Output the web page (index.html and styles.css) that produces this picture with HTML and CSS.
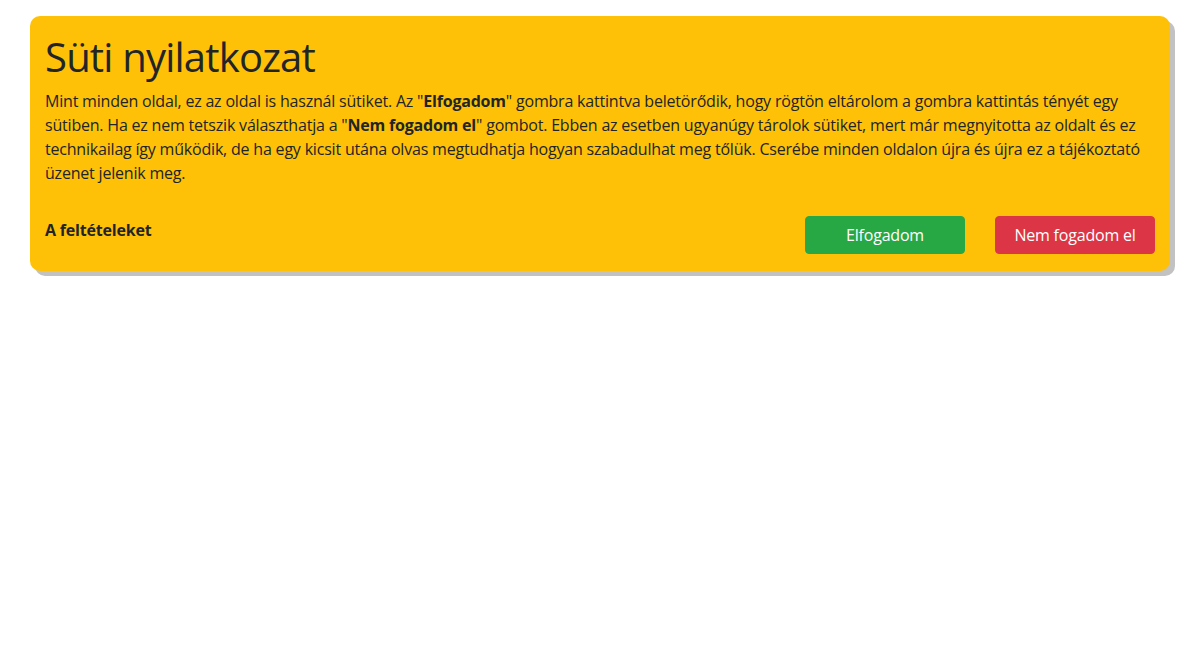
FILE: index.html
```html
<!DOCTYPE html>
<html lang="hu">
<head>
<meta charset="utf-8">
<title>Süti nyilatkozat</title>
<link rel="stylesheet" href="styles.css">
</head>
<body>
<div class="page">
  <div class="cookie-card">
    <h1 class="cookie-title">Süti nyilatkozat</h1>
    <p class="cookie-text">Mint minden oldal, ez az oldal is használ sütiket. Az "<b>Elfogadom</b>" gombra kattintva beletörődik, hogy rögtön eltárolom a gombra kattintás tényét egy sütiben. Ha ez nem tetszik választhatja a "<b>Nem fogadom el</b>" gombot. Ebben az esetben ugyanúgy tárolok sütiket, mert már megnyitotta az oldalt és ez technikailag így működik, de ha egy kicsit utána olvas megtudhatja hogyan szabadulhat meg tőlük. Cserébe minden oldalon újra és újra ez a tájékoztató üzenet jelenik meg.</p>
    <div class="cookie-footer">
      <a class="terms-link">A feltételeket</a>
      <div class="cookie-actions">
        <button class="btn btn-accept">Elfogadom</button>
        <button class="btn btn-decline">Nem fogadom el</button>
      </div>
    </div>
  </div>
</div>
</body>
</html>
```

FILE: styles.css
```css
html, body {
  margin: 0;
  padding: 0;
  background: #fff;
}
body {
  font-family: "Open Sans", "Noto Sans", sans-serif;
  color: #212529;
  font-size: 16px;
  line-height: 1.5;
}
.page {
  padding: 16px 30px;
}
.cookie-card {
  background: #ffc107;
  border-radius: 10px;
  box-shadow: 5px 5px 0 #c2c2c2;
  padding: 17px 15px 17px 15px;
}
.cookie-title {
  margin: 0 0 8px 0;
  font-size: 40px;
  font-weight: 400;
  line-height: 1.2;
  letter-spacing: -0.8px;
}
.cookie-text {
  margin: 0 0 31px 0;
  letter-spacing: -0.2px;
}
.cookie-text b {
  font-weight: 700;
}
.cookie-footer {
  display: flex;
  justify-content: space-between;
  align-items: flex-start;
}
.terms-link {
  font-weight: 700;
  color: #212529;
  margin-top: 2px;
  letter-spacing: -0.2px;
}
.cookie-actions {
  display: flex;
  gap: 30px;
}
.btn {
  width: 160px;
  font-family: inherit;
  font-size: 16px;
  line-height: 24px;
  padding: 6px 12px;
  border: 1px solid transparent;
  border-radius: 4px;
  color: #fff;
  letter-spacing: -0.2px;
}
.btn-accept {
  background: #28a745;
  border-color: #28a745;
}
.btn-decline {
  background: #dc3545;
  border-color: #dc3545;
}
```
